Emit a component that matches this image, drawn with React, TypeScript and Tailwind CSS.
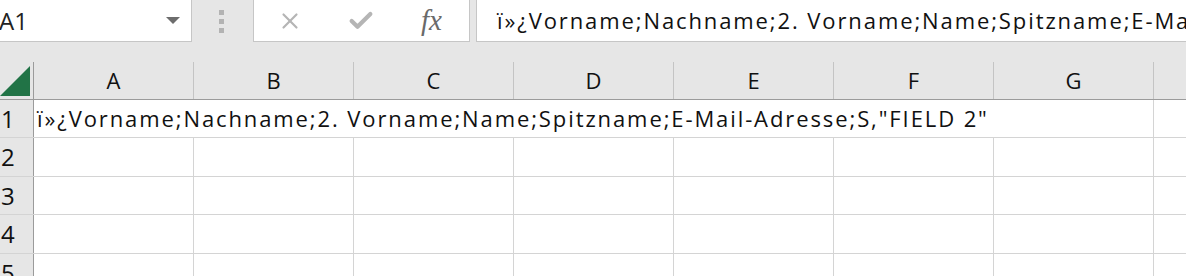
import { X, Check } from 'lucide-react'

const COLS = ['A', 'B', 'C', 'D', 'E', 'F', 'G']
const ROWS = [
  { n: '1', h: 'h-[38px]' },
  { n: '2', h: 'h-[39px]' },
  { n: '3', h: 'h-[38px]' },
  { n: '4', h: 'h-[39px]' },
  { n: '5', h: 'h-[38px]' },
]
const CONTENT = 'ï»¿Vorname;Nachname;2. Vorname;Name;Spitzname;E-Mail-Adresse;S,"FIELD 2"'

function FormulaBar() {
  return (
    <div className="flex h-[42px] items-stretch">
      <div className="flex w-[192px] items-center justify-between border-r border-b border-[#c6c6c6] bg-white pr-[11px]">
        <span className="-ml-[1px] text-[24px] leading-none text-[#222]">A1</span>
        <span className="h-0 w-0 border-x-[7px] border-t-[7px] border-x-transparent border-t-[#6d6d6d]" />
      </div>
      <div className="flex w-[61px] flex-col items-center justify-center gap-[4px] pr-[2px]">
        <span className="h-[5px] w-[5px] bg-[#b3b3b3]" />
        <span className="h-[5px] w-[5px] bg-[#b3b3b3]" />
        <span className="h-[5px] w-[5px] bg-[#b3b3b3]" />
      </div>
      <div className="flex w-[217px] items-center border-x border-b border-[#c6c6c6] bg-white">
        <X className="ml-[23px] h-[26px] w-[26px] text-[#b5b5b5]" strokeWidth={2} />
        <Check className="ml-[44px] h-[28px] w-[28px] text-[#b5b5b5]" strokeWidth={3.6} />
        <span className="ml-[46px] font-['Liberation_Serif',serif] text-[29px] italic leading-none text-[#6a6a6a]">
          fx
        </span>
      </div>
      <div className="ml-[6px] flex flex-1 items-center overflow-hidden whitespace-nowrap border-l border-b border-[#c6c6c6] bg-white pl-[20px]">
        <span className="text-[22px] tracking-[1.9px] text-[#111]">{CONTENT}</span>
      </div>
    </div>
  )
}

function Grid() {
  return (
    <div className="mt-[20px]">
      <div className="flex h-[38px] border-b border-[#9b9b9b]">
        <div className="flex w-[34px] items-end border-r border-[#9b9b9b] pb-[3px]">
          <div className="h-[30px] w-[30px] bg-[#217346] [clip-path:polygon(100%_0,100%_100%,0_100%)]" />
        </div>
        {COLS.map((c) => (
          <div
            key={c}
            className="flex w-[160px] shrink-0 items-center justify-center border-r border-[#c4c4c4] text-[22px] text-[#111]"
          >
            {c}
          </div>
        ))}
        <div className="flex-1" />
      </div>
      {ROWS.map((r, i) => (
        <div key={r.n} className={`flex ${r.h} border-b border-[#d4d4d4] bg-white`}>
          <div className="flex w-[34px] shrink-0 items-center border-r border-[#9b9b9b] bg-[#e6e6e6] text-[24px] text-[#111]">
            <span className="pl-[1px]">{r.n}</span>
          </div>
          <div className="relative flex flex-1">
            {COLS.map((c) => (
              <div key={c} className="w-[160px] shrink-0 border-r border-[#d4d4d4]" />
            ))}
            {i === 0 && (
              <div className="absolute inset-y-0 left-0 flex items-center whitespace-nowrap bg-white pl-[3px] pr-[6px] text-[22px] tracking-[1.9px] text-[#111]">
                {CONTENT}
              </div>
            )}
          </div>
        </div>
      ))}
    </div>
  )
}

export default function App() {
  return (
    <div className="h-[276px] w-[1186px] overflow-hidden bg-[#e6e6e6] font-['Open_Sans','Liberation_Sans',sans-serif]">
      <FormulaBar />
      <Grid />
    </div>
  )
}
